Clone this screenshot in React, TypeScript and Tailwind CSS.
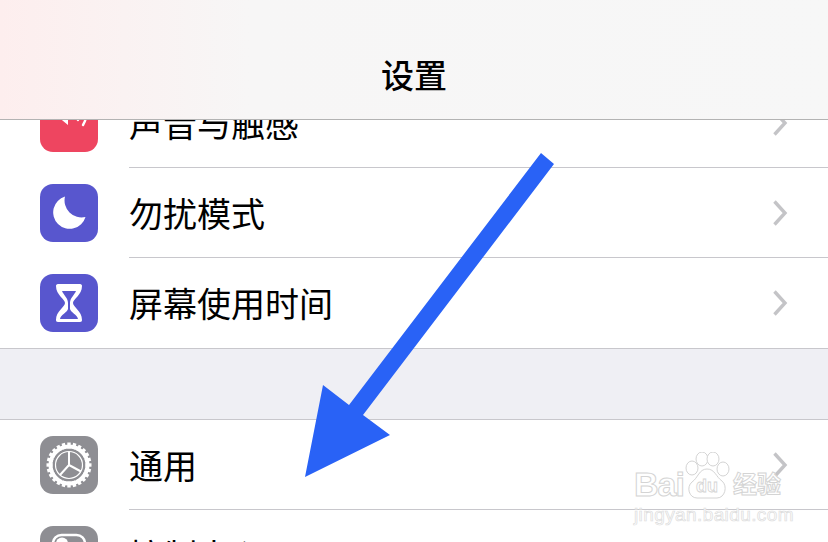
import type { ReactNode } from 'react'

const gearTeeth = Array.from({ length: 24 }, (_, i) => i * 15)

function SoundIcon() {
  return (
    <svg viewBox="0 0 58 58" className="w-full h-full">
      <path d="M10 9h7l11-9v31L17 22h-7z" fill="#fff" />
      <path d="M33 12c2 3 2 7 0 10M38 8c3 5 3 13 0 18M43 3c5 8 5 20 0 28" fill="none" stroke="#fff" strokeWidth="2.4" strokeLinecap="round" />
    </svg>
  )
}

function MoonIcon() {
  return (
    <svg viewBox="0 0 58 58" className="w-full h-full">
      <path d="M25 12.500A16.500 16.500 0 1 0 45.500 33 A17 17 0 0 1 25 12.500z" fill="#fff" />
    </svg>
  )
}

function HourglassIcon() {
  return (
    <svg viewBox="0 0 58 58" className="w-full h-full">
      <path d="M18 10h22c1.500 0 2 1 2 2 0 9-9 13-9 17s9 8 9 17c0 1-.5 2-2 2H18c-1.500 0-2-1-2-2 0-9 9-13 9-17s-9-8-9-17c0-1 .5-2 2-2z" fill="#fff" />
      <path d="M22 17h14c-1.500 4-6 7-6 12v6c1 4 7 5 8 10H20c1-5 7-6 8-10v-6c0-5-4.500-8-6-12z" fill="#5856ce" />
      <path d="M18.500 11h21v6h-21zM27.500 29h3v8h-3z" fill="#fff" opacity="0" />
      <path d="M20 11h18c0 3-1 4-2 6H22c-1-2-2-3-2-6z" fill="#fff" />
    </svg>
  )
}

function GearIcon() {
  return (
    <svg viewBox="0 0 58 58" className="w-full h-full">
      <circle cx="29" cy="29" r="18.500" fill="none" stroke="#fff" strokeWidth="4" />
      {gearTeeth.map((deg) => (
        <rect key={deg} x="27.300" y="6.500" width="3.400" height="6" fill="#fff" transform={`rotate(${deg} 29 29)`} />
      ))}
      <circle cx="29" cy="29" r="13.500" fill="none" stroke="#fff" strokeWidth="1.200" />
      <path d="M29 29V15.500M29 29l12 6.500M29 29l-9 10" fill="none" stroke="#fff" strokeWidth="2" />
    </svg>
  )
}

function ControlIcon() {
  return (
    <svg viewBox="0 0 58 58" className="w-full h-full">
      <rect x="13" y="9" width="32" height="17" rx="8.500" fill="none" stroke="#fff" strokeWidth="2.500" />
      <circle cx="22" cy="17.500" r="6" fill="#fff" />
    </svg>
  )
}

function Chevron() {
  return (
    <svg viewBox="0 0 16 28" className="w-4 h-7 shrink-0">
      <path d="M2.500 2.500 13 14 2.500 25.500" fill="none" stroke="#c4c4c7" strokeWidth="3.400" />
    </svg>
  )
}

function Row({ icon, color, label, last }: { icon: ReactNode; color: string; label: string; last?: boolean }) {
  return (
    <div className="flex items-center h-[90px] pl-10">
      <div className={`w-[58px] h-[58px] rounded-[13px] shrink-0 overflow-hidden ${color}`}>{icon}</div>
      <div className={`flex flex-1 items-center justify-between h-full ml-[31px] pr-10 ${last ? '' : 'border-b border-[#c8c7cc]'}`}>
        <span className="text-[34px] leading-none text-black">{label}</span>
        <Chevron />
      </div>
    </div>
  )
}

function Watermark() {
  return (
    <div className="absolute left-[634px] top-[452px] w-[150px] text-white [-webkit-text-stroke:1px_#d4d4d4] font-['Liberation_Sans','Noto_Sans_CJK_SC',sans-serif]">
      <div className="flex items-end h-[50px]">
        <span className="text-[34px] font-bold leading-[36px] -tracking-[1px]">Bai</span>
        <svg viewBox="0 0 50 50" className="w-[50px] h-[50px] -ml-[2px] shrink-0 fill-white stroke-[#d4d4d4]">
          <ellipse cx="10" cy="16" rx="6" ry="7" />
          <ellipse cx="20" cy="7" rx="6" ry="7" />
          <ellipse cx="31" cy="7" rx="6" ry="7" />
          <ellipse cx="41" cy="17" rx="6" ry="7" />
          <path d="M25 17c8 0 9 8 15 12 6 5 3 17-5 17H15C7 46 4 35 10 30c6-4 7-13 15-13z" />
          <text x="25" y="40" textAnchor="middle" fontSize="18" fontWeight="700" strokeWidth="0.800">du</text>
        </svg>
        <span className="text-[24px] font-bold leading-[34px] ml-px">经验</span>
      </div>
      <div className="text-[19px] leading-[24px] tracking-[0.4px] mt-[1px] whitespace-nowrap [-webkit-text-stroke:0.7px_#dcdcdc]">jingyan.baidu.com</div>
    </div>
  )
}

export default function App() {
  return (
    <div className="relative w-[828px] h-[542px] overflow-hidden bg-white font-['Noto_Sans_CJK_SC',sans-serif]">
      <header className="relative z-10 flex items-center justify-center h-[120px] pt-[30px] border-b border-[#b3b3b3] bg-gradient-to-r from-[#fdeeee] via-[#f7f6f6] via-30% to-[#f7f7f7]">
        <h1 className="text-[33px] leading-none font-medium text-black">设置</h1>
      </header>

      <div className="-mt-[42px]">
        <div className="border-b border-[#c8c7cc]">
          <Row color="bg-[#ee4560]" icon={<SoundIcon />} label="声音与触感" />
          <Row color="bg-[#5856ce]" icon={<MoonIcon />} label="勿扰模式" />
          <Row color="bg-[#5856ce]" icon={<HourglassIcon />} label="屏幕使用时间" last />
        </div>
        <div className="h-[70px] bg-[#efeff4]" />
        <div className="border-t border-[#c8c7cc]">
          <Row color="bg-[#8e8e93]" icon={<GearIcon />} label="通用" />
          <Row color="bg-[#8e8e93]" icon={<ControlIcon />} label="控制中心" />
        </div>
      </div>

      <svg viewBox="0 0 828 542" className="absolute inset-0 w-[828px] h-[542px] pointer-events-none">
        <path d="M541 153 554 164 363 415 390 435 305 477 323 385 349 405z" fill="#2962f6" />
      </svg>
      <Watermark />
    </div>
  )
}
